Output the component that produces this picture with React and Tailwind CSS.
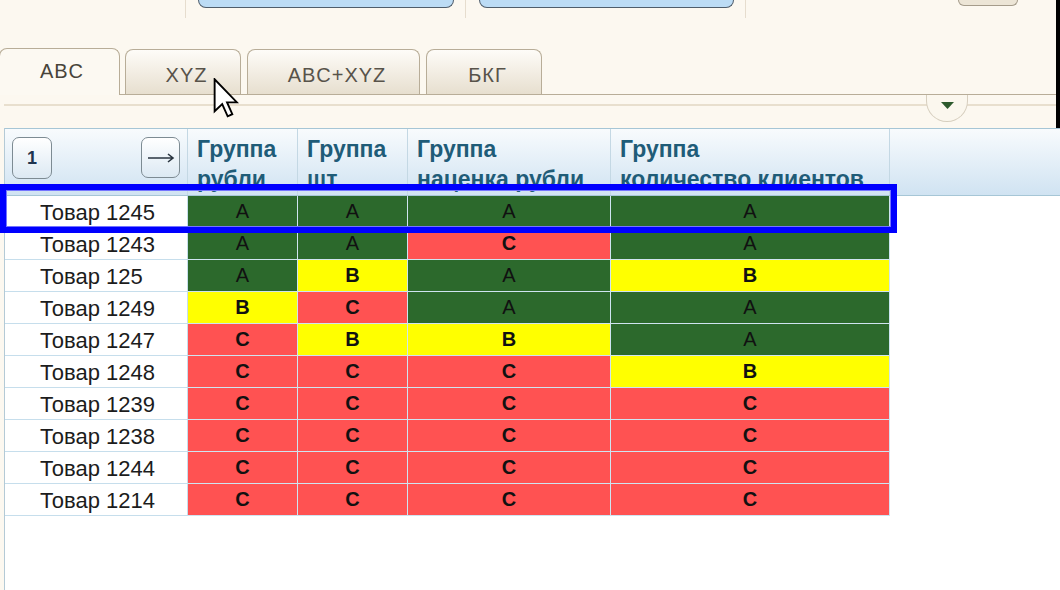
import React from "react";

const rows = [
  ["Товар 1245", "AAAA"],
  ["Товар 1243", "AACA"],
  ["Товар 125", "ABAB"],
  ["Товар 1249", "BCAA"],
  ["Товар 1247", "CBBA"],
  ["Товар 1248", "CCCB"],
  ["Товар 1239", "CCCC"],
  ["Товар 1238", "CCCC"],
  ["Товар 1244", "CCCC"],
  ["Товар 1214", "CCCC"],
];

const widths = ["w-[110px]", "w-[110px]", "w-[203px]", "w-[279px]"];
const bgs = { A: "bg-[#2c692c]", B: "bg-[#ffff00]", C: "bg-[#ff5252]" };

const headers = [
  ["Группа", "рубли"],
  ["Группа", "шт"],
  ["Группа", "наценка рубли"],
  ["Группа", "количество клиентов"],
];

function Cursor() {
  return (
    <svg width="26" height="40" viewBox="0 0 12 19" className="absolute left-[213px] top-[78px]">
      <path
        d="M0.6 0.6 L0.6 15.8 L4.2 12.4 L6.8 18.2 L9 17.2 L6.5 11.6 L11.2 11.6 Z"
        fill="#ffffff"
        stroke="#000000"
        strokeWidth="0.9"
        strokeLinejoin="miter"
      />
    </svg>
  );
}

export default function App() {
  return (
    <div className="relative flex h-[590px] w-[1060px] flex-col overflow-hidden bg-[#fcf8f0] font-['Liberation_Sans',Arial,sans-serif]">
      {/* toolbar remnants */}
      <div className="flex h-[48px] shrink-0 items-start pl-[185px]">
        <div className="h-[18px] w-px bg-[#e6ddce]" />
        <div className="ml-[12px] h-[8px] w-[256px] rounded-b-[9px] border-[1.5px] border-t-0 border-[#4f5d6b] bg-[#bcdcf5]" />
        <div className="ml-[11px] h-[18px] w-px bg-[#e6ddce]" />
        <div className="ml-[13px] h-[8px] w-[255px] rounded-b-[9px] border-[1.5px] border-t-0 border-[#4f5d6b] bg-[#bcdcf5]" />
        <div className="ml-[11px] h-[18px] w-px bg-[#e6ddce]" />
        <div className="ml-[212px] h-[6px] w-[60px] rounded-b-[6px] border border-t-0 border-[#a59c8b] bg-[#ece5d6]" />
      </div>

      {/* tabs */}
      <div className="flex h-[47px] shrink-0 items-end">
        <div className="ml-[-1px] flex h-[47px] w-[121px] justify-center rounded-t-[8px] border border-b-0 border-[#b8ad98] bg-[#fcf9f2] pl-[5px] pt-[10px]">
          <span className="text-[20px] leading-[24px] tracking-[1px] text-[#48443a]">ABC</span>
        </div>
        <div className="flex h-[47px] flex-1 items-end gap-[6px] border-b border-[#b8ad98] pl-[5px]">
          {[
            ["XYZ", "w-[116px]"],
            ["ABC+XYZ", "w-[173px]"],
            ["БКГ", "w-[116px]"],
          ].map(([t, w]) => (
            <div
              key={t}
              className={`flex h-[45px] ${w} justify-center rounded-t-[8px] border border-b-0 border-[#b8ad98] bg-linear-to-b from-[#fefcf8] to-[#e7dfcf] pl-[7px] pt-[13px]`}
            >
              <span className="text-[20px] leading-[24px] tracking-[1px] text-[#58534a]">{t}</span>
            </div>
          ))}
        </div>
      </div>

      {/* band under tabs */}
      <div className="relative h-[33px] shrink-0">
        <div className="ml-[4px] mt-[9px] h-[2px] bg-[#e8dfce]" />
        <div className="absolute left-[926px] top-0 flex h-[27px] w-[42px] justify-center rounded-b-full border border-t-0 border-[#d6cebe] bg-[#fbf7ee] pt-[7px]">
          <svg width="13" height="7" viewBox="0 0 13 7">
            <path d="M0 0 H13 L6.5 7 Z" fill="#2d5a2d" />
          </svg>
        </div>
      </div>

      {/* grid */}
      <div className="ml-[4px] flex flex-1 flex-col border-l border-[#b4cad6] bg-white">
        <div className="flex h-[68px] shrink-0 border-y border-[#a6c6d6] bg-linear-to-b from-[#f8fbfd] to-[#d0e3f2]">
          <div className="flex w-[183px] items-start justify-between border-r border-[#c4d8e4] px-[7px] pt-[8px]">
            <div className="flex h-[42px] w-[40px] items-center justify-center rounded-[7px] border border-[#7d8b93] bg-linear-to-b from-[#ffffff] to-[#dce9f3] text-[18px] font-bold text-[#1f3550]">
              1
            </div>
            <div className="flex h-[41px] w-[39px] items-center justify-center rounded-[7px] border border-[#7d8b93] bg-linear-to-b from-[#ffffff] to-[#dce9f3]">
              <svg width="28" height="12" viewBox="0 0 28 12">
                <path d="M1 6 H26 M21 2 L26 6 L21 10" fill="none" stroke="#2a3540" strokeWidth="1.6" />
              </svg>
            </div>
          </div>
          {headers.map(([a, b], i) => (
            <div
              key={i}
              className={`${widths[i]} overflow-hidden border-r border-[#c4d8e4] pl-[9px] pt-[5px] text-[23px] font-bold leading-[30px] whitespace-nowrap text-[#1f5c78]`}
            >
              <div>{a}</div>
              <div>{b}</div>
            </div>
          ))}
          <div className="flex-1" />
        </div>

        {rows.map(([name, vals]) => (
          <div key={name} className="flex h-[32px] shrink-0">
            <div className="flex w-[183px] items-center border-r border-b border-[#c6deec] bg-white pl-[35px] pt-[2px] text-[22px] text-[#1c1c1c]">
              {name}
            </div>
            {vals.split("").map((v, i) => (
              <div
                key={i}
                className={`${widths[i]} ${bgs[v]} flex items-center justify-center border-r border-b border-[#cfe4f0] pb-[1px] text-[20px] text-[#111] ${v === "A" ? "font-normal" : "font-bold"}`}
              >
                {v}
              </div>
            ))}
          </div>
        ))}
      </div>

      {/* selection frame */}
      <div className="absolute left-0 top-[184px] h-[49px] w-[897px] border-[6px] border-[#0000ff] shadow-[inset_0_0_0_1px_#7474ff]" />

      {/* right edge */}
      <div className="absolute right-0 top-0 h-[128px] w-[4px] bg-black" />

      <Cursor />
    </div>
  );
}
